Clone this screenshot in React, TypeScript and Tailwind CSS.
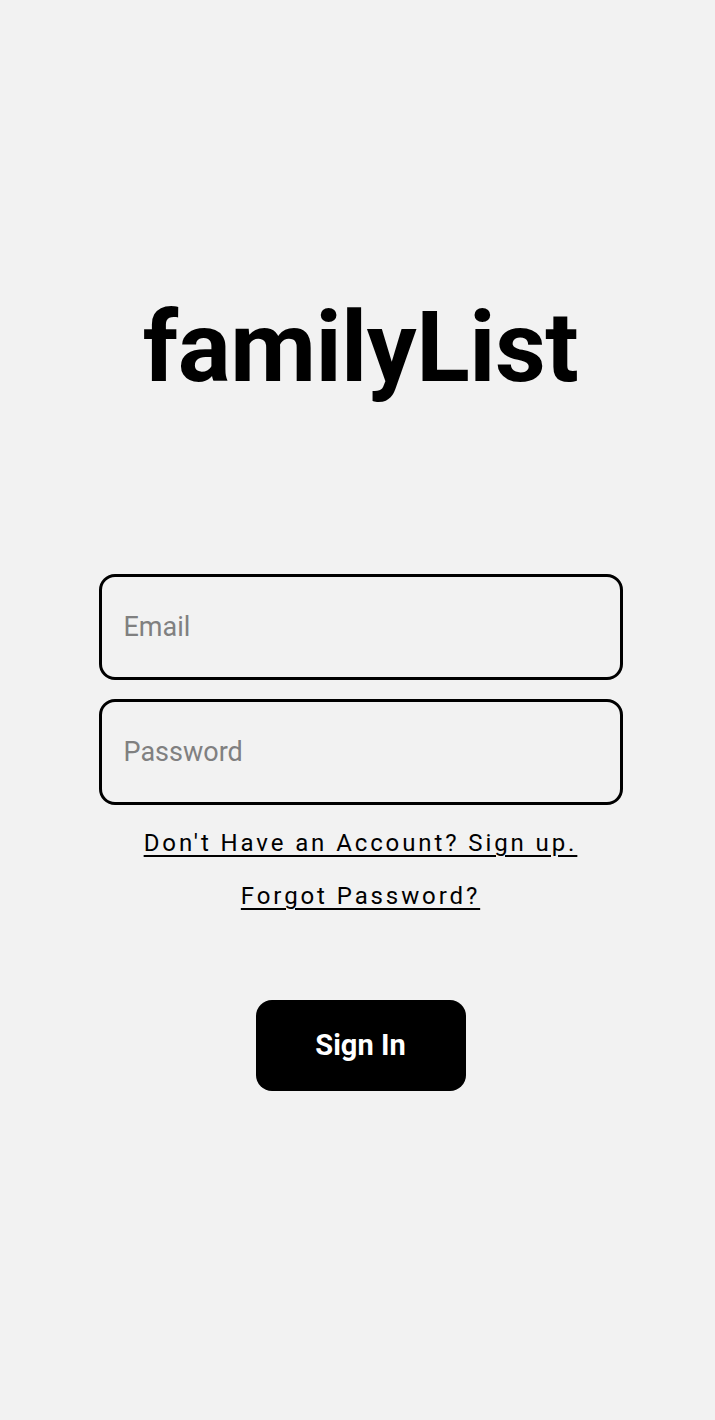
export default function App() {
  return (
    <div className="min-h-[1420px] w-full bg-[#f2f2f2] flex flex-col items-center pl-[6px] font-['Roboto',sans-serif]">
      <h1 className="mt-[287px] text-[99px] leading-[120px] font-bold text-black tracking-[-0.5px]">
        familyList
      </h1>

      <div className="mt-[167px] w-[524px] flex flex-col gap-[19px]">
        <input
          type="email"
          placeholder="Email"
          className="h-[106px] w-full rounded-[16px] border-[3px] border-black bg-transparent px-[22px] text-[27px] text-black placeholder:text-[#808080] outline-none"
        />
        <input
          type="password"
          placeholder="Password"
          className="h-[106px] w-full rounded-[16px] border-[3px] border-black bg-transparent px-[22px] text-[27px] text-black placeholder:text-[#808080] outline-none"
        />
      </div>

      <a href="#" className="mt-[22px] text-[24px] leading-[32px] tracking-[2.9px] text-black underline underline-offset-[4px] decoration-[1.5px]">
        Don't Have an Account? Sign up.
      </a>
      <a href="#" className="mt-[21px] text-[24px] leading-[32px] tracking-[2.9px] text-black underline underline-offset-[4px] decoration-[1.5px]">
        Forgot Password?
      </a>

      <button className="mt-[88px] h-[91px] w-[210px] rounded-[16px] bg-black text-white text-[29px] font-bold">
        Sign In
      </button>
    </div>
  )
}
